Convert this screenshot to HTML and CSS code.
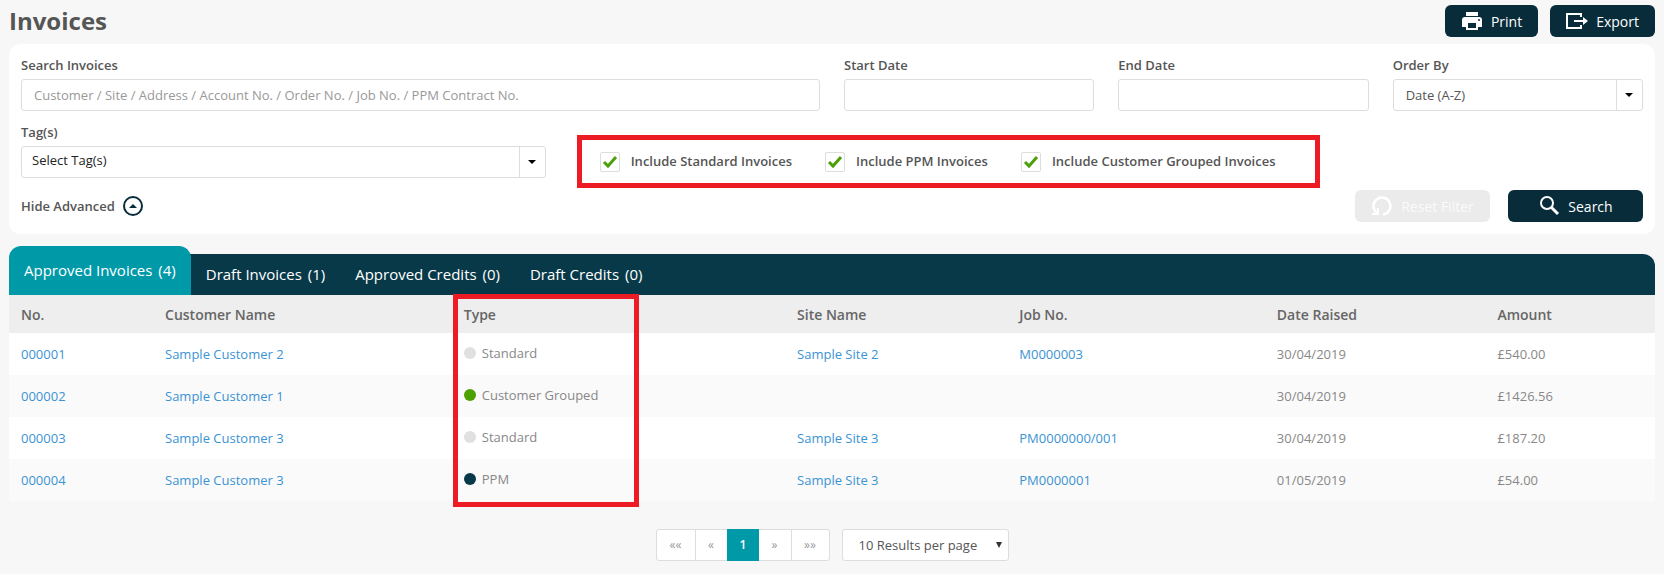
FILE: index.html
```html
<!DOCTYPE html>
<html lang="en">
<head>
<meta charset="utf-8">
<title>Invoices</title>
<link rel="stylesheet" href="styles.css">
</head>
<body>
<header class="page-header">
  <h1>Invoices</h1>
  <div class="header-actions">
    <button class="btn" type="button">
      <svg class="icon" viewBox="0 0 22 22" aria-hidden="true"><path fill="#fff" d="M5 2h12v4H5zM4 7h14a3 3 0 0 1 3 3v7h-4v3H5v-3H1v-7a3 3 0 0 1 3-3zm3 6v5h8v-5zM18 9a1 1 0 1 0 0 2 1 1 0 0 0 0-2z"/></svg>
      Print
    </button>
    <button class="btn" type="button">
      <svg class="icon" viewBox="0 0 22 22" aria-hidden="true"><path fill="none" stroke="#fff" stroke-width="2" d="M15 7V4H1v14h14v-3M8 11h11"/><path fill="#fff" d="M17 7l5 4-5 4z"/></svg>
      Export
    </button>
  </div>
</header>

<form class="filters">
  <div class="field span-3">
    <label for="q">Search Invoices</label>
    <input class="control" id="q" type="text" placeholder="Customer / Site / Address / Account No. / Order No. / Job No. / PPM Contract No.">
  </div>
  <div class="field">
    <label for="start">Start Date</label>
    <input class="control" id="start" type="text">
  </div>
  <div class="field">
    <label for="end">End Date</label>
    <input class="control" id="end" type="text">
  </div>
  <div class="field">
    <label for="order">Order By</label>
    <div class="select-box">
      <select class="control" id="order"><option>Date (A-Z)</option></select>
      <span class="caret"><svg width="8" height="4" viewBox="0 0 8 4" aria-hidden="true"><path d="M0 0h8L4 4z"/></svg></span>
    </div>
  </div>

  <div class="field span-2">
    <label for="tags">Tag(s)</label>
    <div class="select-box">
      <select class="control tags" id="tags"><option>Select Tag(s)</option></select>
      <span class="caret"><svg width="8" height="4" viewBox="0 0 8 4" aria-hidden="true"><path d="M0 0h8L4 4z"/></svg></span>
    </div>
  </div>
  <div class="span-4 checks">
    <label><input type="checkbox" checked>Include Standard Invoices</label>
    <label><input type="checkbox" checked>Include PPM Invoices</label>
    <label><input type="checkbox" checked>Include Customer Grouped Invoices</label>
  </div>

  <div class="filter-footer">
    <button class="toggle" type="button">Hide Advanced
      <svg width="20" height="20" viewBox="0 0 20 20" aria-hidden="true"><circle cx="10" cy="10" r="9" fill="none" stroke="#082c3a" stroke-width="2"/><path fill="#082c3a" d="M6 12l4-4 4 4z"/></svg>
    </button>
    <div class="filter-actions">
      <button class="btn wide" type="button" disabled>
        <svg class="icon" viewBox="0 0 22 22" aria-hidden="true"><path fill="none" stroke="#fff" stroke-width="2.500" d="M6 18A8.500 8.500 0 1 1 12 19.500"/><path fill="none" stroke="#fff" stroke-width="2" d="M1 19h6v-6"/></svg>
        Reset Filter
      </button>
      <button class="btn wide search" type="submit">
        <svg class="icon" viewBox="0 0 22 22" aria-hidden="true"><circle cx="9" cy="8" r="6" fill="none" stroke="#fff" stroke-width="2"/><path stroke="#fff" stroke-width="3" d="M13 12l7 7"/></svg>
        Search
      </button>
    </div>
  </div>
</form>

<nav class="tabs">
  <a class="tab active" href="#approved-invoices">Approved Invoices <span>(4)</span></a>
  <a class="tab" href="#draft-invoices">Draft Invoices <span>(1)</span></a>
  <a class="tab" href="#approved-credits">Approved Credits <span>(0)</span></a>
  <a class="tab" href="#draft-credits">Draft Credits <span>(0)</span></a>
</nav>

<div class="table-wrap">
  <table>
    <colgroup><col class="c-no"><col class="c-customer"><col class="c-type"><col class="c-site"><col class="c-job"><col class="c-date"><col class="c-amount"></colgroup>
    <thead>
      <tr><th>No.</th><th>Customer Name</th><th>Type</th><th>Site Name</th><th>Job No.</th><th>Date Raised</th><th>Amount</th></tr>
    </thead>
    <tbody>
      <tr><td><a href="#1">000001</a></td><td><a href="#c2">Sample Customer 2</a></td><td><span class="type"><i class="dot"></i>Standard</span></td><td><a href="#s2">Sample Site 2</a></td><td><a href="#j3">M0000003</a></td><td>30/04/2019</td><td>£540.00</td></tr>
      <tr><td><a href="#2">000002</a></td><td><a href="#c1">Sample Customer 1</a></td><td><span class="type"><i class="dot grouped"></i>Customer Grouped</span></td><td></td><td></td><td>30/04/2019</td><td>£1426.56</td></tr>
      <tr><td><a href="#3">000003</a></td><td><a href="#c3">Sample Customer 3</a></td><td><span class="type"><i class="dot"></i>Standard</span></td><td><a href="#s3">Sample Site 3</a></td><td><a href="#j1">PM0000000/001</a></td><td>30/04/2019</td><td>£187.20</td></tr>
      <tr><td><a href="#4">000004</a></td><td><a href="#c3">Sample Customer 3</a></td><td><span class="type"><i class="dot ppm"></i>PPM</span></td><td><a href="#s3">Sample Site 3</a></td><td><a href="#j2">PM0000001</a></td><td>01/05/2019</td><td>£54.00</td></tr>
    </tbody>
  </table>
  <div class="type-highlight"></div>
</div>

<footer class="pager">
  <nav class="pages">
    <a class="edge" href="#first">««</a><a href="#prev">«</a><a class="current" href="#page-1">1</a><a href="#next">»</a><a class="edge" href="#last">»»</a>
  </nav>
  <div class="page-size">
    <select class="control" aria-label="Results per page"><option>10 Results per page</option></select>
    <svg width="6" height="6" viewBox="0 0 6 6" aria-hidden="true"><path fill="#333" d="M0 0h6L3 6z"/></svg>
  </div>
</footer>
</body>
</html>
```
FILE: styles.css
```css
* { box-sizing: border-box; }
body {
  margin: 0;
  padding: 0 9px 12px;
  background: #f7f7f7;
  color: #555;
  font: 13px/19px "Open Sans", "Noto Sans", sans-serif;
}
a { color: #3b93d3; text-decoration: none; }
button, input, select { font: inherit; color: inherit; }

.page-header {
  display: flex;
  align-items: center;
  justify-content: space-between;
  height: 44px;
  padding-bottom: 2px;
}
h1 { margin: 0; font-size: 24px; line-height: 32px; font-weight: 700; color: #555; }
.header-actions { display: flex; gap: 12px; }

.btn {
  display: flex;
  align-items: center;
  justify-content: center;
  gap: 8px;
  height: 32px;
  padding: 0 16px;
  border: 0;
  border-radius: 6px;
  background: #082c3a;
  color: #fff;
  font-size: 14px;
}
.btn.wide { width: 135px; padding: 0; }
.btn:disabled { background: #ebebeb; color: #fafafa; }
.icon { width: 22px; height: 22px; flex: none; }

.filters {
  display: grid;
  grid-template-columns: repeat(6, minmax(0, 1fr));
  gap: 12px 24px;
  padding: 12px;
  border-radius: 12px;
  background: #fff;
}
.field { display: flex; flex-direction: column; gap: 4px; }
.span-2 { grid-column: span 2; }
.span-3 { grid-column: span 3; }
.span-4 { grid-column: span 4; }
.filters label { font-weight: 600; }
.control {
  width: 100%;
  height: 32px;
  padding: 0 12px;
  border: 1px solid #ddd;
  border-radius: 3px;
  background: #fff;
  appearance: none;
  outline: 0;
}
.control::placeholder { color: #999; }
.control.tags { padding: 0 10px 4px; color: #222; }
.select-box { position: relative; }
.caret {
  position: absolute;
  top: 1px;
  right: 1px;
  bottom: 1px;
  width: 26px;
  display: flex;
  align-items: center;
  justify-content: center;
  border-left: 1px solid #ddd;
  pointer-events: none;
}

.checks {
  display: flex;
  align-items: center;
  gap: 33px;
  align-self: end;
  justify-self: start;
  height: 53px;
  margin: 0 0 -10px 7px;
  padding: 0 40px 0 18px;
  border: 5px solid #ed1c24;
}
.checks label { display: flex; align-items: center; gap: 11px; }
.checks input {
  width: 20px;
  height: 20px;
  margin: 0;
  border: 1px solid #ddd;
  border-radius: 2px;
  background: #fff url("data:image/svg+xml,%3Csvg xmlns='http://www.w3.org/2000/svg' viewBox='0 0 18 18'%3E%3Cpath d='M3 9l4 4 8-9' fill='none' stroke='%234ca00a' stroke-width='3'/%3E%3C/svg%3E") center / 18px 18px no-repeat;
  appearance: none;
}

.filter-footer { grid-column: 1 / -1; display: flex; align-items: center; justify-content: space-between; }
.filter-actions { display: flex; gap: 18px; }
.toggle {
  display: flex;
  align-items: center;
  gap: 8px;
  padding: 0;
  border: 0;
  background: none;
  font-weight: 600;
}

.tabs {
  position: relative;
  isolation: isolate;
  display: flex;
  align-items: flex-end;
  margin-top: 12px;
}
.tabs::before {
  content: "";
  position: absolute;
  inset: 8px 0 0;
  z-index: -1;
  border-radius: 12px 12px 0 0;
  background: #083949;
}
.tab { padding: 0 15px; color: #fff; font-size: 15px; line-height: 41px; white-space: nowrap; }
.tab span { margin-left: 2px; }
.tab.active { border-radius: 12px 12px 0 0; background: #0099a8; line-height: 49px; }

.table-wrap { position: relative; }
table { width: 100%; border-collapse: collapse; table-layout: fixed; background: #fff; }
.c-no { width: 8.75%; }
.c-customer { width: 18.15%; }
.c-type { width: 20.25%; }
.c-site { width: 13.5%; }
.c-job { width: 15.65%; }
.c-date { width: 13.4%; }
th, td { padding: 0 12px; text-align: left; }
th { height: 38px; background: #eee; color: #666; font-size: 14px; font-weight: 600; }
td { height: 42px; color: #888; }
tbody tr:nth-child(even) { background: #fafafa; }
.type { display: flex; align-items: center; gap: 6px; padding-bottom: 2px; }
.dot { width: 12px; height: 12px; border-radius: 50%; background: #e0e0e0; }
.dot.grouped { background: #4ca000; }
.dot.ppm { background: #083949; }
.type-highlight {
  position: absolute;
  top: -1px;
  bottom: -6px;
  left: 27%;
  width: 186px;
  border: 5px solid #ed1c24;
  pointer-events: none;
}

.pager { display: flex; justify-content: center; gap: 12px; margin-top: 28px; }
.pages { display: flex; border: 1px solid #ddd; border-radius: 3px; background: #fff; }
.pages a { width: 32px; line-height: 30px; text-align: center; font-size: 12px; color: #999; border-left: 1px solid #ddd; }
.pages .edge { width: 38px; }
.pages a:first-child { border-left: 0; }
.pages .current { margin: -1px 0; line-height: 32px; background: #0099a8; border-color: #0099a8; color: #fff; font-weight: 600; }
.pages .current + a { border-left: 0; }
.page-size { position: relative; width: 167px; }
.page-size .control { padding: 1px 16px 0; }
.page-size svg { position: absolute; top: 13px; right: 7px; pointer-events: none; }
```
